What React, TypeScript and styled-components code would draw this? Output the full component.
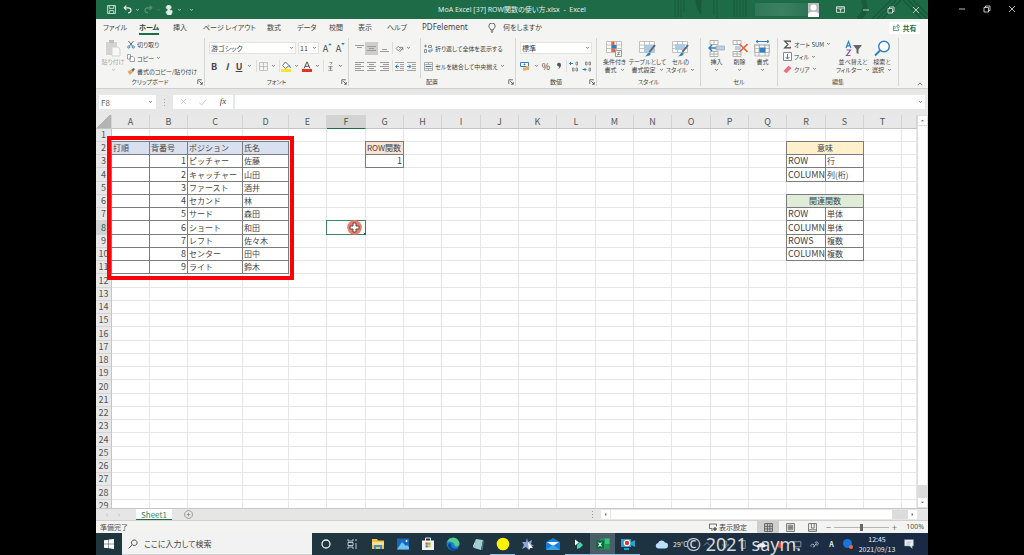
import React from "react";
import styled, { createGlobalStyle, css } from "styled-components";

const GlobalStyle = createGlobalStyle`
  * { box-sizing: border-box; }
  body { margin: 0; background: #000; }
  body, button, input, select {
    font-family: "Noto Sans CJK JP", "Noto Sans", sans-serif;
    font-size: 7px;
    font-feature-settings: "palt";
    color: #444;
  }
  button, input, select { border: 0; padding: 0; margin: 0; background: none; border-radius: 0; }
  svg { display: block; flex: none; }
`;

const GREEN = "#1e6b47";
const LINE = "#7c7c7c";

const Desktop = styled.div`
  display: grid;
  grid-template-columns: 96px minmax(0, 1fr) 96px;
  height: 100vh;
  background: #000;
`;
const OuterControls = styled.div`
  display: flex;
  justify-content: flex-end;
  height: 18px;
`;
const Screen = styled.main`
  grid-column: 2;
  display: flex;
  flex-direction: column;
  min-width: 0;
  height: 100vh;
  background: #e7e7e7;
`;
const WindowButton = styled.button`
  width: 25px;
  height: 18px;
  display: flex;
  align-items: center;
  justify-content: center;
  color: #e6ece8;
`;

/* Title bar */
const TitleBar = styled.header`
  position: relative;
  display: grid;
  grid-template-columns: 1fr auto 1fr;
  align-items: center;
  height: 19px;
  flex: none;
  background: ${GREEN};
  color: #e3eee8;
`;
const TitlePattern = styled.svg`
  position: absolute;
  top: 0;
  right: 0;
`;
const QuickAccess = styled.div`
  display: flex;
  align-items: center;
  padding-left: 7px;
`;
const QuickButton = styled.button<{ $w: number; $dim?: boolean }>`
  width: ${(p) => p.$w}px;
  height: 18px;
  display: flex;
  align-items: center;
  justify-content: center;
  color: #e3eee8;
  opacity: ${(p) => (p.$dim ? 0.3 : 1)};
`;
const Title = styled.h1`
  margin: 0;
  font-family: "Noto Sans", "Noto Sans CJK JP", sans-serif;
  font-size: 7px;
  line-height: 18px;
  font-weight: 400;
  white-space: pre;
`;
const TitleRight = styled.div`
  position: relative;
  display: flex;
  justify-content: flex-end;
  align-items: center;
`;
const AccountName = styled.div`
  width: 53px;
  height: 13px;
  background: linear-gradient(90deg, #2f7857, #3c8062 50%, #2c7453);
`;
const Avatar = styled.div`
  width: 11px;
  height: 14px;
  margin-right: 9px;
  background: #b9bdbb;
  overflow: hidden;
`;

/* Ribbon */
const TabRow = styled.nav`
  display: flex;
  justify-content: space-between;
  align-items: center;
  height: 17px;
  flex: none;
  padding: 0 8px 0 7px;
  background: #f4f4f2;
`;
const Tabs = styled.div`
  display: grid;
  grid-template-columns: 36px 34px 30px 64px 30px 32px 29px 29px 35px 65px 16px auto;
  align-items: center;
`;
const Tab = styled.button<{ $active?: boolean; $latin?: boolean }>`
  justify-self: start;
  height: 15px;
  padding-top: 1px;
  line-height: 12px;
  white-space: nowrap;
  border-bottom: 2px solid ${(p) => (p.$active ? GREEN : "transparent")};
  ${(p) => p.$active && css`font-weight: 700; color: #264f3c;`}
  ${(p) => p.$latin && css`font-family: "Noto Sans", sans-serif; font-size: 8px;`}
`;
const ShareButton = styled.button`
  display: flex;
  align-items: center;
  justify-content: center;
  gap: 3px;
  width: 31px;
  height: 12px;
  background: #fff;
  color: ${GREEN};
  font-weight: 700;
`;
const Ribbon = styled.section`
  display: flex;
  height: 53px;
  flex: none;
  background: #f4f4f2;
  border-bottom: 1px solid #cfcfcf;
`;
const Group = styled.div<{ $w: number }>`
  position: relative;
  display: flex;
  flex-direction: column;
  width: ${(p) => p.$w}px;
  flex: none;
  margin: 2px 0;
  border-right: 1px solid #d6d6d4;
`;
const GroupBody = styled.div<{ $pad?: number }>`
  display: flex;
  height: 42px;
  padding-left: ${(p) => p.$pad || 0}px;
`;
const GroupName = styled.div`
  text-align: center;
  font-size: 6px;
  line-height: 8px;
`;
const Launcher = styled.button`
  position: absolute;
  right: 1px;
  bottom: 1px;
`;
const Column = styled.div<{ $pad?: number; $w?: number; $divided?: boolean }>`
  display: flex;
  flex-direction: column;
  padding-left: ${(p) => p.$pad || 0}px;
  ${(p) => p.$w && css`width: ${p.$w}px;`}
  ${(p) => p.$divided && css`border-right: 1px solid #d6d6d4;`}
`;
const ToolRow = styled.div<{ $h: number; $pad?: number }>`
  display: flex;
  align-items: center;
  height: ${(p) => p.$h}px;
  padding-left: ${(p) => p.$pad || 0}px;
`;
const Tool = styled.button<{ $w: number; $on?: boolean }>`
  width: ${(p) => p.$w}px;
  height: 13px;
  flex: none;
  display: flex;
  align-items: center;
  justify-content: center;
  font-size: 9px;
  line-height: 13px;
  background: ${(p) => (p.$on ? "#cfcdcb" : "transparent")};
`;
const SizeTool = styled(Tool)`
  color: #444;
  svg { align-self: flex-start; }
`;
const Divider = styled.span<{ $w: number }>`
  width: ${(p) => p.$w}px;
  height: 12px;
  border-right: 1px solid #dededc;
`;
const LabelTool = styled.button`
  display: flex;
  align-items: center;
  gap: 2px;
  height: 13px;
  white-space: nowrap;
  font-size: 6px;
  line-height: 13px;
`;
const BigTool = styled.button<{ $w: number; $dim?: boolean }>`
  width: ${(p) => p.$w}px;
  height: 38px;
  display: flex;
  flex-direction: column;
  align-items: center;
  font-size: 6px;
  line-height: 8px;
  white-space: nowrap;
  opacity: ${(p) => (p.$dim ? 0.45 : 1)};
`;
const BigIcon = styled.span`
  height: 20px;
  display: flex;
  align-items: center;
`;
const WithCaret = styled.span`
  display: flex;
  align-items: center;
  gap: 3px;
  min-height: 8px;
`;
const SelectWrap = styled.span<{ $w: number }>`
  position: relative;
  width: ${(p) => p.$w}px;
  height: 12px;
  margin-right: 2px;
  svg { position: absolute; right: 2px; top: 4px; pointer-events: none; }
`;
const Select = styled.select`
  appearance: none;
  width: 100%;
  height: 12px;
  padding-left: 1px;
  background: #fff;
  border: 1px solid #e2e2e0;
  line-height: 10px;
`;
const Collapse = styled.button`
  flex: 1;
  display: flex;
  justify-content: flex-end;
  align-items: flex-end;
  padding: 0 5px 1px 0;
`;

/* Formula bar */
const FormulaBar = styled.div`
  display: flex;
  align-items: center;
  height: 26px;
  flex: none;
  padding: 0 3px;
  background: #e7e7e7;
`;
const NameBox = styled.span`
  position: relative;
  width: 57px;
  svg { position: absolute; right: 3px; top: 5px; }
`;
const TextBox = styled.input`
  display: block;
  width: 100%;
  height: 14px;
  padding-left: 2px;
  background: #fff;
  font-size: 8px;
  color: #666;
`;
const Dots = styled.span`
  width: 17px;
  display: flex;
  justify-content: center;
`;
const FormulaTools = styled.div`
  display: flex;
  width: 60px;
  height: 14px;
  margin-right: 2px;
  background: #fff;
`;
const FormulaField = styled.span`
  position: relative;
  flex: 1;
  svg { position: absolute; right: 2px; top: 5px; }
`;
const Fx = styled.i`
  font-family: "Liberation Serif", serif;
  font-size: 9px;
`;

/* Sheet */
const SheetArea = styled.div`
  display: flex;
  flex: 1;
  min-height: 0;
  overflow: hidden;
`;
const SheetPane = styled.div`
  position: relative;
  flex: 1;
  min-width: 0;
  overflow: hidden;
  background: #fff;
`;
const Grid = styled.table`
  width: 100%;
  table-layout: fixed;
  border-collapse: separate;
  border-spacing: 0;
  font-size: 8px;
  font-feature-settings: normal;
`;
const Col = styled.col<{ $w?: number }>`
  ${(p) => p.$w && css`width: ${p.$w}px;`}
`;
const ColHead = styled.th<{ $on?: boolean }>`
  height: 14px;
  padding: 0;
  font-size: 9px;
  line-height: 12px;
  font-weight: 400;
  color: ${(p) => (p.$on ? GREEN : "#555")};
  background: ${(p) => (p.$on ? "#d3d3d3" : "#e8e8e8")};
  border-right: 1px solid #d4d4d4;
  border-bottom: 1px solid ${(p) => (p.$on ? GREEN : "#c4c4c4")};
`;
const Corner = styled(ColHead)`
  background: linear-gradient(135deg, #e8e8e8 50%, #b4b4b4 50%);
`;
const Row = styled.tr`
  height: 13px;
  &:nth-child(4n) { height: 14px; }
`;
const RowHead = styled.th<{ $on?: boolean }>`
  padding: 0;
  font-size: 9px;
  line-height: 12px;
  font-weight: 400;
  text-align: center;
  color: ${(p) => (p.$on ? GREEN : "#555")};
  background: ${(p) => (p.$on ? "#d3d3d3" : "#e8e8e8")};
  border-right: 1px solid #c4c4c4;
  border-bottom: 1px solid #d4d4d4;
`;
type CellProps = { $boxed?: boolean; $fill?: string; $align?: string; $latin?: boolean; $selected?: boolean };
const Cell = styled.td<CellProps>`
  position: relative;
  padding: 0 1px;
  line-height: 12px;
  font-size: ${(p) => (p.$latin ? 9 : 8)}px;
  white-space: nowrap;
  overflow: hidden;
  text-align: ${(p) => p.$align || "left"};
  background: ${(p) => p.$fill || "transparent"};
  border-right: 1px solid #e6e6e6;
  border-bottom: 1px solid #e6e6e6;
  ${(p) => p.$boxed && css`
    border-color: ${LINE};
    box-shadow: -1px 0 0 ${LINE}, 0 -1px 0 ${LINE}, -1px -1px 0 ${LINE};
  `}
  ${(p) => p.$selected && css`
    overflow: visible;
    border-color: #3c8563;
    box-shadow: -1px 0 0 #3c8563, 0 -1px 0 #3c8563, -1px -1px 0 #3c8563;
  `}
`;
const FillHandle = styled.span`
  position: absolute;
  right: -1px;
  bottom: -1px;
  width: 2px;
  height: 2px;
  background: ${GREEN};
`;
const Pointer = styled.svg`
  position: absolute;
  left: 20px;
  top: -1px;
`;
const Highlight = styled.div`
  position: absolute;
  left: 11px;
  top: 21px;
  width: 187px;
  height: 144px;
  border: 4px solid #fb0007;
  pointer-events: none;
`;
const VScroll = styled.div`
  display: flex;
  flex-direction: column;
  width: 11px;
  padding: 1px 1px 1px 1px;
  background: #dcdcdc;
`;
const ScrollButton = styled.button`
  width: 9px;
  height: 9px;
  flex: none;
  display: flex;
  align-items: center;
  justify-content: center;
  background: #fff;
`;
const VThumb = styled.div`
  flex: 1;
  margin: 1px 0 13px;
  background: #fff;
`;
const SheetBar = styled.div`
  display: flex;
  align-items: center;
  height: 13px;
  flex: none;
  border-top: 1px solid #c6c6c6;
  border-bottom: 1px solid #d0d0d0;
  background: #e6e6e6;
`;
const SheetNav = styled.div`
  display: flex;
  justify-content: center;
  gap: 8px;
  width: 40px;
  padding-right: 6px;
  color: #aaa;
`;
const SheetTab = styled.button`
  width: 36px;
  height: 11px;
  background: #fff;
  color: #2f7f5b;
  font-size: 8px;
  line-height: 9px;
  border-bottom: 1px solid ${GREEN};
`;
const AddSheet = styled.button`
  margin-left: 12px;
  color: #8a8a8a;
`;
const HScroll = styled.div`
  display: flex;
  align-items: center;
  margin-left: auto;
  width: 344px;
  padding-right: 11px;
`;
const HTrack = styled.div`
  flex: 1;
  height: 9px;
  margin-left: 1px;
  padding-right: 16px;
  background: #dcdcdc;
`;
const HThumb = styled.div`
  height: 9px;
  background: #fff;
`;
const StatusBar = styled.footer`
  display: flex;
  align-items: center;
  justify-content: space-between;
  height: 12px;
  flex: none;
  padding: 0 4px;
  background: #f3f3f1;
  color: #555;
  line-height: 12px;
`;
const StatusRight = styled.div`
  display: flex;
  align-items: center;
`;
const ViewSettings = styled.button`
  display: flex;
  align-items: center;
  gap: 2px;
  margin-right: 10px;
  line-height: 12px;
`;
const ViewButton = styled.button<{ $on?: boolean }>`
  width: 22px;
  height: 12px;
  display: flex;
  align-items: center;
  justify-content: center;
  background: ${(p) => (p.$on ? "#cfcfcd" : "transparent")};
`;
const ZoomButton = styled.button`
  width: 11px;
  font-size: 9px;
  line-height: 11px;
  color: #777;
`;
const ZoomRange = styled.input`
  appearance: none;
  width: 55px;
  height: 9px;
  background: linear-gradient(#b5b5b5, #b5b5b5) center / 100% 1px no-repeat;
  &::-webkit-slider-thumb {
    appearance: none;
    width: 3px;
    height: 7px;
    background: #666;
  }
`;
const ZoomValue = styled.span`
  width: 24px;
  font-family: "Noto Sans", sans-serif;
  font-size: 7px;
  text-align: right;
`;

/* Taskbar */
const Taskbar = styled.div`
  position: relative;
  display: flex;
  align-items: stretch;
  height: 22px;
  flex: none;
  background: linear-gradient(90deg, #20363f, #1e3441 60%, #1b2a44);
  color: #e8edf0;
`;
const TaskButton = styled.button<{ $w?: number; $open?: boolean; $on?: boolean }>`
  width: ${(p) => p.$w || 25}px;
  flex: none;
  display: flex;
  align-items: center;
  justify-content: center;
  color: #e8edf0;
  background: ${(p) => (p.$on ? "#4b5d68" : "transparent")};
  ${(p) => p.$open && css`box-shadow: inset 0 -1px 0 #8fc0e6;`}
`;
const SearchBox = styled.label`
  display: flex;
  align-items: center;
  gap: 6px;
  width: 190px;
  padding-left: 6px;
  background: #f2f2f2;
  border-bottom: 1px solid #cfd3d5;
  color: #444;
`;
const SearchInput = styled.input`
  width: 150px;
  font-size: 8px;
  &::placeholder { color: #444; opacity: 1; }
`;
const Weather = styled.button`
  display: flex;
  align-items: center;
  gap: 5px;
  margin-left: 15px;
  color: #e8edf0;
  font-size: 7px;
`;
const Tray = styled.div`
  display: flex;
  margin-left: auto;
`;
const Clock = styled.time`
  width: 44px;
  padding: 1px 0 0;
  text-align: center;
  font-size: 7px;
  line-height: 10px;
`;
const Watermark = styled.div`
  position: absolute;
  left: 590px;
  bottom: 0;
  font-family: "Noto Sans", sans-serif;
  font-size: 18px;
  line-height: 22px;
  color: rgba(255, 255, 255, 0.82);
  white-space: nowrap;
  pointer-events: none;
`;

/* Icons */
type IconProps = { d: string; w?: number; h?: number; box?: string; sw?: number; fill?: string; color?: string };
const Icon = ({ d, w = 9, h, box = "0 0 16 16", sw = 1.5, fill = "none", color = "currentColor" }: IconProps) => (
  <svg width={w} height={h || w} viewBox={box} fill={fill} stroke={color} strokeWidth={sw} aria-hidden="true">
    <path d={d} />
  </svg>
);
const Caret = () => <Icon d="M1.500 1.500 3 3 4.500 1.500" w={5} box="0 0 6 5" sw={1} h={4} />;
const Arrow = ({ d }: { d: string }) => <Icon d={d} w={5} box="0 0 6 6" fill="#666" sw={0} />;
const LauncherButton = () => (
  <Launcher aria-label="詳細"><Icon w={6} d="M2 13V2h11M6 6l8 8M14 8v6H8" sw={2} /></Launcher>
);
const Minimize = () => <Icon d="M2 8h12" w={8} sw={1.6} />;
const Restore = () => <Icon d="M2 5h9v9H2zM5 5V2h9v9h-3" w={8} sw={1.6} />;
const Close = () => <Icon d="M2 2l12 12M14 2 2 14" w={8} sw={1.6} />;
const Lines = ({ rows }: { rows: [number, number, number][] }) => (
  <svg width="9" height="9" viewBox="0 0 9 9" stroke="#9a9a9a" strokeWidth="1" aria-hidden="true">
    {rows.map(([y, a, b]) => <path key={y} d={`M${a} ${y + 0.5}H${b}`} />)}
  </svg>
);
const Indent = ({ flip }: { flip?: boolean }) => (
  <svg width="9" height="9" viewBox="0 0 9 9" aria-hidden="true">
    <path d="M0 .5h9M5 2.500h4M5 4.500h4M5 6.500h4M0 8.500h9" stroke="#a0a0a0" />
    <path d={flip ? "M0 4.500h3.500M2 2.500l2 2-2 2" : "M4 4.500H.5M2.500 2.500l-2 2 2 2"} stroke="#2f7fc4" fill="none" />
  </svg>
);
const TableGlyph = ({ children }: { children?: React.ReactNode }) => (
  <svg width="17" height="17" viewBox="0 0 17 17" fill="none" aria-hidden="true">
    <path d="M.5 1.500h15v11H.5zM.5 5h15M.5 8.500h15M5.500 1.500v11M10.500 1.500v11" fill="#fff" stroke="#b4b4b4" strokeWidth=".8" />
    {children}
  </svg>
);
const Brush = () => (
  <g>
    <path d="M16 5 10.500 12" stroke="#666" strokeWidth="2" />
    <path d="M5 16.500c3 0 3-4 5.500-4 2.500 1 1 4-5.500 4z" fill="#2f7fc4" />
  </g>
);
const DocIcon = () => (
  <svg width="16" height="18" viewBox="0 0 16 18" aria-hidden="true">
    <path d="M1 3h11v13H1z" fill="#b0adaa" /><path d="M4 1h5v3H4z" fill="#7f7d7b" />
    <path d="M7 8h6l2 2v7H7z" fill="#fff" stroke="#aaa" />
  </svg>
);

/* Sheet data */
const COLUMNS: [string, number?][] = [
  ["A", 38], ["B", 38], ["C", 55], ["D", 46], ["E", 38], ["F", 39], ["G", 38], ["H", 38], ["I", 39], ["J", 38],
  ["K", 38], ["L", 39], ["M", 38], ["N", 38], ["O", 39], ["P", 38], ["Q", 38], ["R", 39], ["S", 38], ["T", 38], [""],
];
const LINEUP = [
  ["ピッチャー", "佐藤"], ["キャッチャー", "山田"], ["ファースト", "酒井"], ["セカンド", "林"], ["サード", "森田"],
  ["ショート", "和田"], ["レフト", "佐々木"], ["センター", "田中"], ["ライト", "鈴木"],
];
type CellData = { v?: string; fill?: string; align?: string; latin?: boolean; span?: number };
const CELLS: Record<string, CellData> = {
  G2: { v: "ROW関数", fill: "#fbe3d3" },
  G3: { v: "1", align: "right", latin: true },
  R2: { v: "意味", fill: "#fdf0cb", align: "center", span: 2 },
  R3: { v: "ROW", latin: true }, S3: { v: "行" },
  R4: { v: "COLUMN", latin: true }, S4: { v: "列(桁)" },
  R6: { v: "関連関数", fill: "#e0ecd8", align: "center", span: 2 },
  R7: { v: "ROW", latin: true }, S7: { v: "単体" },
  R8: { v: "COLUMN", latin: true }, S8: { v: "単体" },
  R9: { v: "ROWS", latin: true }, S9: { v: "複数" },
  R10: { v: "COLUMNS", latin: true }, S10: { v: "複数" },
};
["打順", "背番号", "ポジション", "氏名"].forEach((v, i) => { CELLS["ABCD"[i] + "2"] = { v, fill: "#d9e1f1" }; });
LINEUP.forEach(([pos, name], i) => {
  const r = i + 3;
  CELLS["A" + r] = {};
  CELLS["B" + r] = { v: String(i + 1), align: "right", latin: true };
  CELLS["C" + r] = { v: pos };
  CELLS["D" + r] = { v: name };
});

const Sheet = () => (
  <Grid>
    <colgroup>
      <Col $w={16} />
      {COLUMNS.map(([name, w]) => <Col key={name} $w={w} />)}
    </colgroup>
    <thead>
      <tr>
        <Corner />
        {COLUMNS.map(([name]) => <ColHead key={name} $on={name === "F"}>{name}</ColHead>)}
      </tr>
    </thead>
    <tbody>
      {Array.from({ length: 29 }, (_, i) => i + 1).map((r) => (
        <Row key={r}>
          <RowHead $on={r === 8}>{r}</RowHead>
          {COLUMNS.map(([name]) => {
            const cell = CELLS[name + r];
            if (name === "S" && CELLS["R" + r]?.span) return null;
            if (name === "F" && r === 8) {
              return (
                <Cell key={name} $selected>
                  <FillHandle />
                  <Pointer width="15" height="15" viewBox="0 0 15 15">
                    <circle cx="7.500" cy="7.500" r="7.300" fill="#f47a69" />
                    <path d="M6 3h3v3h3v3H9v3H6V9H3V6h3z" fill="#fff" stroke="#444" strokeWidth=".9" />
                  </Pointer>
                </Cell>
              );
            }
            return (
              <Cell key={name} $boxed={!!cell} $fill={cell?.fill} $align={cell?.align} $latin={cell?.latin} colSpan={cell?.span}>
                {cell?.v}
              </Cell>
            );
          })}
        </Row>
      ))}
    </tbody>
  </Grid>
);

const RibbonGroups = () => (
  <Ribbon>
    <Group $w={109}>
      <GroupBody $pad={3}>
        <BigTool $w={28} $dim><BigIcon><DocIcon /></BigIcon><span>貼り付け</span><WithCaret><Caret /></WithCaret></BigTool>
        <Column>
          <ToolRow $h={13}>
            <LabelTool>
              <svg width="8" height="9" viewBox="0 0 16 16" fill="none" strokeWidth="1.800" aria-hidden="true">
                <path d="M3 1l8 10M13 1 5 11" stroke="#555" /><circle cx="3.500" cy="13" r="2.200" stroke="#2f7fc4" /><circle cx="12.500" cy="13" r="2.200" stroke="#2f7fc4" />
              </svg>切り取り
            </LabelTool>
          </ToolRow>
          <ToolRow $h={14}>
            <LabelTool><Icon w={8} d="M1 1h6v9H1zM6 5h6l3 3v7H6z" color="#7d8790" fill="#fff" />コピー<Caret /></LabelTool>
          </ToolRow>
          <ToolRow $h={13}>
            <LabelTool>
              <svg width="8" height="9" viewBox="0 0 16 16" aria-hidden="true">
                <path d="M1 8l6-3 4 5-5 5z" fill="#eaa64c" /><path d="M8 5l5-4 3 2-4 6z" fill="#6b6b6b" />
              </svg>書式のコピー/貼り付け
            </LabelTool>
          </ToolRow>
        </Column>
      </GroupBody>
      <GroupName>クリップボード</GroupName>
      <LauncherButton />
    </Group>

    <Group $w={144}>
      <GroupBody $pad={2}>
        <Column>
          <ToolRow $h={20} $pad={2}>
            <SelectWrap $w={87}><Select aria-label="フォント"><option>游ゴシック</option></Select><Caret /></SelectWrap>
            <SelectWrap $w={21}><Select aria-label="サイズ"><option>11</option></Select><Caret /></SelectWrap>
            <SizeTool $w={13} aria-label="拡大">A<Icon w={4} d="M1 13 8 4l7 9z" sw={0} fill="#2f7fc4" /></SizeTool>
            <SizeTool $w={13} aria-label="縮小">A<Icon w={4} d="M1 4l7 9 7-9z" sw={0} fill="#2f7fc4" /></SizeTool>
          </ToolRow>
          <ToolRow $h={16}>
            <Tool $w={14}><b>B</b></Tool>
            <Tool $w={12}><b><i>I</i></b></Tool>
            <Tool $w={12}><b><u>U</u></b></Tool>
            <Tool $w={9} aria-label="下線"><Caret /></Tool>
            <Divider $w={3} />
            <Tool $w={12} aria-label="罫線"><Icon w={9} d="M1 1h14v14H1zM8 1v14M1 8h14" color="#aaa" sw={1.2} /></Tool>
            <Tool $w={9} aria-label="罫線の種類"><Caret /></Tool>
            <Divider $w={2} />
            <Tool $w={12} aria-label="塗りつぶし">
              <svg width="10" height="11" viewBox="0 0 10 11" aria-hidden="true">
                <path d="M4.500 1 8 4.500 4.500 7.500 1.500 4.500z" fill="#fff" stroke="#777" /><path d="M8 4l1.500 3" stroke="#2f7fc4" /><path d="M0 8h10v3H0z" fill="#f7e623" />
              </svg>
            </Tool>
            <Tool $w={9} aria-label="塗りつぶしの色"><Caret /></Tool>
            <Tool $w={12} aria-label="文字色">
              <svg width="10" height="11" viewBox="0 0 10 11" aria-hidden="true">
                <path d="M2 7.500 5 .8l3 6.700M3 5.300h4" fill="none" stroke="#555" /><path d="M0 8h10v3H0z" fill="#e03426" />
              </svg>
            </Tool>
            <Tool $w={9} aria-label="フォントの色"><Caret /></Tool>
            <Divider $w={2} />
            <Tool $w={12} aria-label="ふりがな"><Icon w={9} d="M6 1h5L8 5M4 8h8M8 7v8M5 11h6M4 15h8" color="#777" sw={1.2} /></Tool>
            <Tool $w={9} aria-label="ふりがなの表示"><Caret /></Tool>
          </ToolRow>
        </Column>
      </GroupBody>
      <GroupName>フォント</GroupName>
      <LauncherButton />
    </Group>

    <Group $w={167}>
      <GroupBody $pad={4}>
        <Column $w={68} $divided>
          <ToolRow $h={20}>
            <Tool $w={12} aria-label="上揃え"><Lines rows={[[1, 0, 9], [3, 2, 7]]} /></Tool>
            <Tool $w={13} $on aria-label="上下中央揃え"><Lines rows={[[2, 0, 9], [4, 2, 7], [6, 0, 9]]} /></Tool>
            <Tool $w={12} aria-label="下揃え"><Lines rows={[[5, 2, 7], [7, 0, 9]]} /></Tool>
            <Divider $w={3} />
            <Tool $w={12} aria-label="方向"><Icon w={9} d="M2 8l4-4 4 4-4 4zM8 14l6-7M14 11V6h-5" color="#777" /></Tool>
            <Tool $w={7} aria-label="方向の種類"><Caret /></Tool>
          </ToolRow>
          <ToolRow $h={16}>
            <Tool $w={12} aria-label="左揃え"><Lines rows={[[0, 0, 9], [2, 0, 6], [4, 0, 9], [6, 0, 6], [8, 0, 9]]} /></Tool>
            <Tool $w={13} aria-label="中央揃え"><Lines rows={[[0, 0, 9], [2, 2, 7], [4, 0, 9], [6, 2, 7], [8, 0, 9]]} /></Tool>
            <Tool $w={12} aria-label="右揃え"><Lines rows={[[0, 0, 9], [2, 3, 9], [4, 0, 9], [6, 3, 9], [8, 0, 9]]} /></Tool>
            <Divider $w={3} />
            <Tool $w={12} aria-label="インデントを減らす"><Indent /></Tool>
            <Tool $w={12} aria-label="インデントを増やす"><Indent flip /></Tool>
          </ToolRow>
        </Column>
        <Column $pad={3}>
          <ToolRow $h={20}>
            <LabelTool>
              <svg width="9" height="9" viewBox="0 0 9 9" fill="none" aria-hidden="true">
                <path d="M0 2h3M1.500.5v3M4.500 1.500h3v2h-3zM.5 5.500h2v3h-2z" stroke="#777" strokeWidth=".8" /><path d="M8 4.500v2.500H4.500M6 5.500 4.500 7 6 8.500" stroke="#2f7fc4" strokeWidth=".9" />
              </svg>折り返して全体を表示する
            </LabelTool>
          </ToolRow>
          <ToolRow $h={16}>
            <LabelTool>
              <svg width="9" height="9" viewBox="0 0 9 9" fill="none" aria-hidden="true">
                <path d="M.5.5h8v8h-8zM.5 2.500h8M.5 6.500h8M4.500.5v2M4.500 6.500v2" stroke="#999" strokeWidth=".8" /><path d="M1.500 4.500h6" stroke="#2f7fc4" />
              </svg>セルを結合して中央揃え<Caret />
            </LabelTool>
          </ToolRow>
        </Column>
      </GroupBody>
      <GroupName>配置</GroupName>
      <LauncherButton />
    </Group>

    <Group $w={81}>
      <GroupBody $pad={2}>
        <Column>
          <ToolRow $h={20} $pad={2}>
            <SelectWrap $w={72}><Select aria-label="表示形式"><option>標準</option></Select><Caret /></SelectWrap>
          </ToolRow>
          <ToolRow $h={16}>
            <Tool $w={14} aria-label="通貨">
              <svg width="10" height="10" viewBox="0 0 10 10" aria-hidden="true">
                <path d="M.5 1.500h8v4h-8z" fill="#fff" stroke="#2f7fc4" /><circle cx="4.500" cy="3.500" r="1" fill="#2f7fc4" /><path d="M3 6.500h3v3H3zM6 5h3v4H6z" fill="#e7ad67" />
              </svg>
            </Tool>
            <Tool $w={8} aria-label="通貨の種類"><Caret /></Tool>
            <Tool $w={12}>%</Tool>
            <Tool $w={13} aria-label="桁区切り"><Icon w={8} d="M4 5a4 4 0 1 1 8 1c0 4-3 7-6 8 2-2 3-3 2-5-2 0-4-2-4-4z" fill="#555" sw={0} /></Tool>
            <Divider $w={2} />
            {["M4 2.500H.5M2 1 .5 2.500 2 4", "M.5 8.500H4M2.500 7 4 8.500 2.500 10"].map((d, i) => (
              <Tool key={d} $w={13} aria-label={i ? "小数点以下を減らす" : "小数点以下を増やす"}>
                <svg width="10" height="11" viewBox="0 0 10 11" fill="none" aria-hidden="true">
                  <path d={d} stroke="#2f7fc4" />
                  <path d={i ? "M3.500 1h1.500v3H3.500zM7 1h1.500v3H7z" : "M7 1h1.500v3H7z"} stroke="#777" strokeWidth=".8" />
                  <path d={i ? "M7 7h1.500v3H7z" : "M3.500 7h1.500v3H3.500zM7 7h1.500v3H7z"} stroke="#777" strokeWidth=".8" />
                </svg>
              </Tool>
            ))}
          </ToolRow>
        </Column>
      </GroupBody>
      <GroupName>数値</GroupName>
      <LauncherButton />
    </Group>

    <Group $w={104}>
      <GroupBody $pad={1}>
        <BigTool $w={33}>
          <BigIcon><TableGlyph><path d="M5.500 1.500h3v3.500h-3zM5.500 8.500h4v3.500h-4z" fill="#e2673d" /><path d="M5.500 5h5v3.500h-5z" fill="#2f7fc4" /><path d="M9.500 10.500h6v6h-6z" fill="#fff" stroke="#999" /><path d="M11 12.700h3M11 14.500h3M11.500 15.500l2-4" stroke="#666" strokeWidth=".6" /></TableGlyph></BigIcon>
          <span>条件付き</span><WithCaret>書式<Caret /></WithCaret>
        </BigTool>
        <BigTool $w={33}>
          <BigIcon><TableGlyph><path d="M5.500 5h10v7.500h-10z" fill="#a9cbe6" /><Brush /></TableGlyph></BigIcon>
          <span>テーブルとして</span><WithCaret>書式設定<Caret /></WithCaret>
        </BigTool>
        <BigTool $w={33}>
          <BigIcon><TableGlyph><path d="M3 4h10v6H3z" fill="#a9cbe6" /><Brush /></TableGlyph></BigIcon>
          <span>セルの</span><WithCaret>スタイル<Caret /></WithCaret>
        </BigTool>
      </GroupBody>
      <GroupName>スタイル</GroupName>
    </Group>

    <Group $w={77}>
      <GroupBody $pad={4}>
        <BigTool $w={23}>
          <BigIcon>
            <svg width="17" height="17" viewBox="0 0 17 17" fill="none" aria-hidden="true">
              <path d="M2 .5h8v4H2zM6 .5v4M2 11.500h8v5H2zM6 11.500v5M2 14h8" fill="#fff" stroke="#b0b0b0" /><path d="M8 6h8.500v4H8z" fill="#b6d2e8" stroke="#999" strokeWidth=".6" /><path d="M8 8H1M4 5 1 8l3 3" stroke="#2f7fc4" strokeWidth="1.500" />
            </svg>
          </BigIcon><span>挿入</span><WithCaret><Caret /></WithCaret>
        </BigTool>
        <BigTool $w={23}>
          <BigIcon>
            <svg width="17" height="17" viewBox="0 0 17 17" fill="none" aria-hidden="true">
              <path d="M2 .5h8v4H2zM6 .5v4M2 11.500h8v5H2zM6 11.500v5M2 14h8" fill="#fff" stroke="#b0b0b0" /><path d="M4 6h6v4H4z" fill="#b6d2e8" /><path d="M8.500 4l8 8M16.500 4l-8 8" stroke="#e2673d" strokeWidth="1.600" />
            </svg>
          </BigIcon><span>削除</span><WithCaret><Caret /></WithCaret>
        </BigTool>
        <BigTool $w={23}>
          <BigIcon>
            <TableGlyph><path d="M0 0h17v4H0z" fill="#f4f4f2" /><path d="M2 1.500h13M4 0 2 1.500 4 3M13 0l2 1.500L13 3" stroke="#2f7fc4" /><path d="M1 5h14v11H1zM5 5v11M11 5v11" stroke="#aaa" strokeWidth=".8" /><path d="M5.500 7.500h6v5h-6z" fill="#2f7fc4" /></TableGlyph>
          </BigIcon><span>書式</span><WithCaret><Caret /></WithCaret>
        </BigTool>
      </GroupBody>
      <GroupName>セル</GroupName>
    </Group>

    <Group $w={121}>
      <GroupBody $pad={5}>
        <Column $w={55}>
          <ToolRow $h={12}><LabelTool><Icon w={9} d="M13 4V2H3l6 6-6 6h10v-2" sw={2} />オート SUM<Caret /></LabelTool></ToolRow>
          <ToolRow $h={13}>
            <LabelTool>
              <svg width="9" height="9" viewBox="0 0 9 9" fill="none" aria-hidden="true"><path d="M.5.5h8v8h-8z" fill="#fff" stroke="#888" /><path d="M4.500 2v5M2.500 5l2 2 2-2" stroke="#2f7fc4" /></svg>フィル<Caret />
            </LabelTool>
          </ToolRow>
          <ToolRow $h={12}>
            <LabelTool>
              <svg width="9" height="9" viewBox="0 0 9 9" aria-hidden="true"><path d="M.5 6 5.500.8 8.500 3 3.500 8.300z" fill="#ec6d7b" /></svg>クリア<Caret />
            </LabelTool>
          </ToolRow>
        </Column>
        <BigTool $w={30}>
          <BigIcon>
            <svg width="17" height="17" viewBox="0 0 17 17" fill="none" aria-hidden="true">
              <path d="M1 8 3.500 1.500 6 8M2 5.800h3" stroke="#2f7fc4" strokeWidth="1.200" /><path d="M1.500 10h4l-4 5.500h4" stroke="#8b56b0" strokeWidth="1.200" /><path d="M8 5h9l-3.500 4.500V14L11.500 13V9.500z" fill="#666" />
            </svg>
          </BigIcon><span>並べ替えと</span><WithCaret>フィルター<Caret /></WithCaret>
        </BigTool>
        <BigTool $w={28}>
          <BigIcon><svg width="17" height="17" viewBox="0 0 17 17" fill="none" stroke="#2f7fc4" aria-hidden="true"><circle cx="10" cy="6.500" r="5.300" strokeWidth="1.400" fill="#fff" /><path d="M6 10.500 1 15.500" strokeWidth="2" /></svg></BigIcon>
          <span>検索と</span><WithCaret>選択<Caret /></WithCaret>
        </BigTool>
      </GroupBody>
      <GroupName>編集</GroupName>
    </Group>
    <Collapse aria-label="リボンを折りたたむ"><Icon w={6} d="M2 11l6-6 6 6" sw={2} /></Collapse>
  </Ribbon>
);

const TaskIcon = ({ children }: { children: React.ReactNode }) => (
  <svg width="14" height="14" viewBox="0 0 14 14" fill="none" aria-hidden="true">{children}</svg>
);

export default function App() {
  return (
    <Desktop>
      <GlobalStyle />
      <Screen>
        <TitleBar>
          <TitlePattern width="262" height="19" viewBox="0 0 262 19" fill="none" stroke="#195a3b" aria-hidden="true">
            <path d="M9 0v17M12 0v17M15 0v17M18 0v12M48 0v15M51 0v18M68 0v17M71 0v17M74 0v17M77 0v17M80 0v17" />
            <path d="M30 0c0 6 2 10 5 14V0z" fill="#195a3b" /><path d="M192 19c8-5 8-14 5-19" strokeWidth="5" />
            <path d="M206 19 225 0M211 19 230 0M216 19 235 0M237 0l19 19M242 0l19 19M247 0l15 15" strokeWidth="1.500" />
          </TitlePattern>
          <QuickAccess>
            <QuickButton $w={16} aria-label="保存"><Icon w={9} d="M1 1h14v14H1zM4 1v5h8V1M4 15v-5h8v5" /></QuickButton>
            <QuickButton $w={16} aria-label="元に戻す"><Icon w={9} d="M6 1 2 5l4 4M2 5h7c7 0 7 9 0 9" sw={2} /></QuickButton>
            <QuickButton $w={5} aria-label="元に戻す履歴"><Caret /></QuickButton>
            <QuickButton $w={16} $dim aria-label="やり直し"><Icon w={9} d="M10 1l4 4-4 4M14 5H7c-7 0-7 9 0 9" sw={2} /></QuickButton>
            <QuickButton $w={5} $dim aria-label="やり直し履歴"><Caret /></QuickButton>
            <QuickButton $w={16} aria-label="タッチ"><Icon w={10} d="M6 9V4a1 1 0 0 1 3 0v4l4 1v3l-2 4H6l-3-5zM4 6a4 4 0 1 1 7 0" fill="currentColor" sw={1} /></QuickButton>
            <QuickButton $w={5} aria-label="タッチの種類"><Caret /></QuickButton>
            <QuickButton $w={19} aria-label="カスタマイズ"><Caret /></QuickButton>
          </QuickAccess>
          <Title>{"MoA Excel [37] ROW関数の使い方.xlsx  -  Excel"}</Title>
          <TitleRight>
            <AccountName />
            <Avatar><svg width="11" height="14" viewBox="0 0 11 14" fill="#fff" aria-hidden="true"><circle cx="5.500" cy="4.500" r="3" /><path d="M0 14V11c2-3 9-3 11 0v3z" /></svg></Avatar>
            <WindowButton aria-label="リボンの表示"><Icon w={9} d="M1 3h14v10H1zM1 5.500h14M8 12V7M6 9l2-2 2 2" /></WindowButton>
            <WindowButton aria-label="最小化"><Minimize /></WindowButton>
            <WindowButton aria-label="元のサイズ"><Restore /></WindowButton>
            <WindowButton aria-label="閉じる"><Close /></WindowButton>
          </TitleRight>
        </TitleBar>

        <TabRow>
          <Tabs>
            <Tab>ファイル</Tab><Tab $active>ホーム</Tab><Tab>挿入</Tab><Tab>ページ レイアウト</Tab><Tab>数式</Tab><Tab>データ</Tab>
            <Tab>校閲</Tab><Tab>表示</Tab><Tab>ヘルプ</Tab><Tab $latin>PDFelement</Tab>
            <Icon w={10} d="M6 11c0-2-3-3-3-6a5 5 0 0 1 10 0c0 3-3 4-3 6zM6 13h4M7 15h2" sw={1.3} />
            <Tab>何をしますか</Tab>
          </Tabs>
          <ShareButton><Icon w={7} d="M5 5H1v10h12v-4M4 11c0-4 3-6 7-6V1l4 5-4 4V7" />共有</ShareButton>
        </TabRow>

        <RibbonGroups />

        <FormulaBar>
          <NameBox><TextBox aria-label="名前ボックス" defaultValue="F8" /><Caret /></NameBox>
          <Dots><Icon w={3} h={9} box="0 0 3 9" d="M1 1h1v1H1zM1 4h1v1H1zM1 7h1v1H1z" fill="#aaa" sw={0} /></Dots>
          <FormulaTools>
            <Tool $w={20} aria-label="キャンセル"><Icon w={7} d="M2 2l12 12M14 2 2 14" color="#bbb" /></Tool>
            <Tool $w={20} aria-label="入力"><Icon w={8} d="M1 9l4 5L15 3" color="#bbb" /></Tool>
            <Tool $w={20}><Fx>fx</Fx></Tool>
          </FormulaTools>
          <FormulaField><TextBox aria-label="数式" /><Caret /></FormulaField>
        </FormulaBar>

        <SheetArea>
          <SheetPane><Sheet /><Highlight /></SheetPane>
          <VScroll>
            <ScrollButton aria-label="上へ"><Arrow d="M1 4l2-2 2 2z" /></ScrollButton>
            <VThumb />
            <ScrollButton aria-label="下へ"><Arrow d="M1 2l2 2 2-2z" /></ScrollButton>
          </VScroll>
        </SheetArea>

        <SheetBar>
          <SheetNav><Icon w={4} d="M11 2 5 8l6 6" sw={2} /><Icon w={4} d="M5 2l6 6-6 6" sw={2} /></SheetNav>
          <SheetTab>Sheet1</SheetTab>
          <AddSheet aria-label="シートの追加"><Icon w={9} d="M8 1a7 7 0 1 0 .1 0zM8 5v6M5 8h6" /></AddSheet>
          <HScroll>
            <Dots><Icon w={3} h={9} box="0 0 3 9" d="M1 1h1v1H1zM1 4h1v1H1zM1 7h1v1H1z" fill="#999" sw={0} /></Dots>
            <ScrollButton aria-label="左へ"><Arrow d="M4 1 2 3l2 2z" /></ScrollButton>
            <HTrack><HThumb /></HTrack>
            <ScrollButton aria-label="右へ"><Arrow d="M2 1l2 2-2 2z" /></ScrollButton>
          </HScroll>
        </SheetBar>

        <StatusBar>
          <span>準備完了</span>
          <StatusRight>
            <ViewSettings><Icon w={8} d="M15 7V2H1v9h6M4 14h4M10 10h4v4h-4zM12 8v8M8 12h8" />表示設定</ViewSettings>
            <ViewButton $on aria-label="標準"><Icon w={9} d="M1 1h14v14H1zM1 6h14M1 10.500h14M6 1v14M10.500 1v14" color="#555" /></ViewButton>
            <ViewButton aria-label="ページ レイアウト"><Icon w={9} d="M1 1h14v14H1zM4 4h8v8H4zM5 6h6M5 8h6M5 10h6" color="#666" /></ViewButton>
            <ViewButton aria-label="改ページ"><Icon w={9} d="M1 1h14v14H1zM6 1v8h5V1M1 12h14" color="#666" /></ViewButton>
            <ZoomButton aria-label="縮小">−</ZoomButton>
            <ZoomRange type="range" aria-label="ズーム" defaultValue={50} />
            <ZoomButton aria-label="拡大">+</ZoomButton>
            <ZoomValue>100%</ZoomValue>
          </StatusRight>
        </StatusBar>

        <Taskbar>
          <TaskButton $w={26} aria-label="スタート"><svg width="10" height="10" viewBox="0 0 10 10" fill="#fff" aria-hidden="true"><path d="M0 1.300 4.500.7v4H0zM5 .6 10 0v4.700H5zM0 5.200h4.500v4L0 8.700zM5 5.200h5V10l-5-.7z" /></svg></TaskButton>
          <SearchBox>
            <Icon w={10} d="M10 1.500a4.500 4.500 0 1 0 .1 0zM6.500 9.500 1 15" sw={1.5} />
            <SearchInput aria-label="検索" placeholder="ここに入力して検索" />
          </SearchBox>
          <TaskButton $w={27} aria-label="Cortana"><TaskIcon><circle cx="7" cy="7" r="4" stroke="#eee" strokeWidth="1.300" /></TaskIcon></TaskButton>
          <TaskButton $w={26} aria-label="タスク ビュー"><TaskIcon><path d="M3 2v2h5V2M3 12v-2h5v2M3 5.500h5v3H3zM11 2v2M11 6v6" stroke="#bcc6ca" /></TaskIcon></TaskButton>
          <TaskButton aria-label="エクスプローラー"><TaskIcon><path d="M1 2h5l1 1.500h6V12H1z" fill="#f3c04b" /><path d="M1 5h12v3H1z" fill="#fbe08d" /><path d="M3 8h8v4H9v-2H5v2H3z" fill="#3d8fd6" /></TaskIcon></TaskButton>
          <TaskButton aria-label="フォト"><TaskIcon><path d="M1 1.500h12v11H1z" fill="#1469bd" /><path d="M1 12.500 6 5l4 4 1-1 2 2v2.500z" fill="#6fc3f2" /><circle cx="10.500" cy="4" r="1" fill="#fff" /></TaskIcon></TaskButton>
          <TaskButton aria-label="ストア"><TaskIcon><path d="M4.500 4V1h5v3" stroke="#eee" /><path d="M1 3.500h12V13H1z" fill="#f4f4f4" /><path d="M4.500 5.500h2.300v2.300H4.500z" fill="#e64f2c" /><path d="M7.200 5.500h2.300v2.300H7.200z" fill="#7db82b" /><path d="M4.500 8.200h2.300v2.300H4.500z" fill="#2197d8" /><path d="M7.200 8.200h2.300v2.300H7.200z" fill="#f6b31b" /></TaskIcon></TaskButton>
          <TaskButton aria-label="Edge"><TaskIcon><circle cx="7" cy="7" r="6.500" fill="#1b7fd0" /><path d="M1 5C3-1 13-1 13.500 7c-.5 3-5 3-5 1 0-3-5-4-7.500-3z" fill="#4fcf8a" /><path d="M5 7c0 5 4 5 7 4-4 5-10 1-10-3 1-2 3-2 3-1z" fill="#0c4a97" /></TaskIcon></TaskButton>
          <TaskButton aria-label="メモ帳"><TaskIcon><path d="M5 2l7 1-2 10-7-2z" fill="#9fd0d8" /><path d="M10 13l2-10 1 1-1.500 9z" fill="#5a7078" /><path d="M3 11l2-9-3 7z" fill="#dfeef0" /></TaskIcon></TaskButton>
          <TaskButton $open aria-label="マーカー"><TaskIcon><circle cx="7" cy="7" r="6.300" fill="#fff200" /></TaskIcon></TaskButton>
          <TaskButton aria-label="ポインター"><TaskIcon><path d="M6 1l1 4 4-2-1 4 3 2-4 0-1 4-3-3-4 2 2-4-2-3 4 0z" fill="#8fa3d6" /><path d="M7 5l5 6-3 0-1 2z" fill="#fff" /></TaskIcon></TaskButton>
          <TaskButton aria-label="メール"><TaskIcon><path d="M0 5l7-4 7 4v8H0z" fill="#1680d8" /><path d="M1 5h12L7 9z" fill="#f2f8fd" /><path d="M0 13l7-5 7 5z" fill="#3aa5ef" /></TaskIcon></TaskButton>
          <TaskButton $open aria-label="Filmora"><TaskIcon><path d="M1 1h12v12H1z" fill="#22333c" /><path d="M4 2.500l4 3-4 3z" fill="#dff" /><path d="M6 8l3-3 3 3-3 3-3 1z" fill="#3fd6b4" /></TaskIcon></TaskButton>
          <TaskButton $open $on aria-label="Excel"><TaskIcon><path d="M4 1.500h9.500v11H4z" fill="#1f9a5a" /><path d="M9 1.500h4.500V7H9z" fill="#35c481" /><path d="M0 3.500h8v8H0z" fill="#10693c" /><path d="M2.500 5.500l3 4M5.500 5.500l-3 4" stroke="#fff" strokeWidth="1.100" /></TaskIcon></TaskButton>
          <TaskButton $open aria-label="レコーダー"><TaskIcon><path d="M0 2h10v8H0zM10 5l4-2v7l-4-2zM3 11h5v2H3z" fill="#2aa1cf" /><circle cx="6" cy="6" r="3.300" fill="#fff" /><circle cx="6" cy="6" r="2.200" fill="#e1382e" /></TaskIcon></TaskButton>
          <Weather>
            <svg width="13" height="10" viewBox="0 0 13 10" aria-hidden="true"><path d="M3 9.500a2.800 2.800 0 0 1 0-5.500 3.800 3.800 0 0 1 7-.5 3 3 0 0 1 0 6z" fill="#b9e0fa" /></svg>29°C
          </Weather>
          <Tray>
            <TaskButton $w={18} aria-label="隠れているインジケーター"><Icon w={8} d="M2 11l6-6 6 6" color="#9fadb7" /></TaskButton>
            <TaskButton $w={18} aria-label="マイク"><Icon w={9} d="M6 2h4v7H6zM3 7c0 7 10 7 10 0M8 12v3" color="#8fa0ac" /></TaskButton>
            <TaskButton $w={18} aria-label="電源"><Icon w={9} d="M4 1h7v14H4z" color="#8fa0ac" /></TaskButton>
            <TaskButton $w={18} aria-label="OneDrive"><Icon w={9} d="M1 12h13V8l-4-3-5 2-4 2z" fill="#eee" /></TaskButton>
            <TaskButton $w={18} aria-label="録画"><TaskIcon><circle cx="8" cy="8" r="3" fill="#e1382e" /></TaskIcon></TaskButton>
            <TaskButton $w={18} aria-label="ディスプレイ"><Icon w={9} d="M1 3h13v9H1zM5 15h6" color="#8fa0ac" /></TaskButton>
            <TaskButton $w={17} aria-label="リンク"><Icon w={9} d="M2 12a3 3 0 1 1 4 1l6-8M9 5a3 3 0 1 1 4 4l-4-1" color="#b4c0c9" /></TaskButton>
            <TaskButton $w={17}><b>A</b></TaskButton>
            <TaskButton $w={15} aria-label="ブラウザー"><TaskIcon><circle cx="6.500" cy="6.500" r="4.500" fill="#1674dc" /><circle cx="10" cy="10" r="2" fill="#ee6b34" /></TaskIcon></TaskButton>
            <Clock>12:45<br />2021/09/13</Clock>
            <TaskButton $w={20} aria-label="通知"><Icon w={10} d="M1 1h14v10h-2v4l-4-4H1zM4 5h8M4 8h6" fill="#f0f3f5" color="#8b98a6" sw={1} /></TaskButton>
            <TaskButton $w={9} aria-label="デスクトップの表示" />
          </Tray>
          <Watermark>© 2021 saym.</Watermark>
        </Taskbar>
      </Screen>
      <OuterControls>
        <WindowButton aria-label="最小化"><Minimize /></WindowButton>
        <WindowButton aria-label="元のサイズ"><Restore /></WindowButton>
        <WindowButton aria-label="閉じる"><Close /></WindowButton>
      </OuterControls>
    </Desktop>
  );
}
